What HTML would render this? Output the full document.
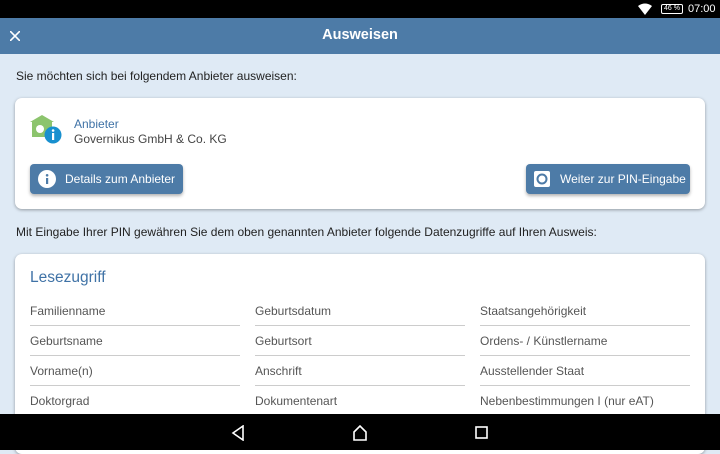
<!DOCTYPE html>
<html><head><meta charset="utf-8"><style>
*{margin:0;padding:0;box-sizing:border-box}
body{width:720px;height:450px;overflow:hidden;background:#dfeaf5;font-family:"Liberation Sans",sans-serif;position:relative}
.sb{position:absolute;left:0;top:0;width:720px;height:18px;background:#000;color:#fff;font-size:11px}
.hd{position:absolute;left:0;top:18px;width:720px;height:36px;background:#4d7ba7;color:#fff}
.hd .t{position:absolute;left:0;right:0;top:9px;text-align:center;font-weight:bold;font-size:14.5px}
.p{position:absolute;left:16px;font-size:12px;color:#222;white-space:nowrap}
.card{position:absolute;left:15px;width:690px;background:#fff;border-radius:7px;box-shadow:0 1px 3px rgba(0,0,0,.35)}
.btn{position:absolute;height:30px;background:#4d7ba7;border-radius:4px;color:#fff;font-size:12px;box-shadow:0 2px 3px rgba(0,0,0,.3);white-space:nowrap}
.cell{position:absolute;width:210px;font-size:12px;color:#555;height:30px;border-bottom:1px solid #ccc;padding-top:8px;white-space:nowrap}
.nav{position:absolute;left:0;top:414px;width:720px;height:36px;background:#000}
</style></head><body>
<div class="sb">
<svg style="position:absolute;left:638px;top:3px" width="14" height="12" viewBox="0 0 14 12"><path d="M0 3 Q7 -2 14 3 L7 12Z" fill="#fff"/></svg>
<div style="position:absolute;left:661px;top:4px;width:22px;height:10px;border:1px solid #fff;border-radius:2px;font-size:7px;text-align:center;line-height:8px">46 %</div>
<div style="position:absolute;left:688px;top:3px;font-size:11px">07:00</div>
</div>
<div class="hd">
<svg style="position:absolute;left:10px;top:13px" width="10" height="10" viewBox="0 0 10 10"><path d="M0 0L10 10M10 0L0 10" stroke="#fff" stroke-width="1.6"/></svg>
<div class="t">Ausweisen</div>
</div>
<div class="p" style="top:69px">Sie möchten sich bei folgendem Anbieter ausweisen:</div>
<div class="card" style="top:98px;height:111px">
<svg style="position:absolute;left:15px;top:15px" width="36" height="34" viewBox="0 0 36 34">
<path d="M0 9 L12 2 L24 9Z" fill="#8cc46d"/><rect x="2" y="9" width="20" height="15" fill="#8cc46d"/><circle cx="10" cy="16" r="4" fill="#fff"/><circle cx="23" cy="22" r="8.5" fill="#1890cf"/><rect x="22" y="20" width="2.2" height="7" fill="#fff"/><circle cx="23.1" cy="17.5" r="1.3" fill="#fff"/></svg>
<div style="position:absolute;left:59px;top:19px;font-size:12px;color:#3f72a6">Anbieter</div>
<div style="position:absolute;left:59px;top:34px;font-size:12px;color:#444">Governikus GmbH &amp; Co. KG</div>
<div class="btn" style="left:15px;top:66px;width:153px">
<svg style="position:absolute;left:8px;top:6px" width="18" height="18"><circle cx="9" cy="9" r="9" fill="#fff"/><rect x="8" y="8" width="2.2" height="6" fill="#4d7ba7"/><circle cx="9.1" cy="5.3" r="1.3" fill="#4d7ba7"/></svg>
<span style="position:absolute;left:35px;top:8px">Details zum Anbieter</span></div>
<div class="btn" style="left:511px;top:66px;width:164px">
<svg style="position:absolute;left:8px;top:7px" width="16" height="16"><rect width="16" height="16" rx="2" fill="#fff"/><circle cx="8" cy="8" r="4.5" fill="none" stroke="#4d7ba7" stroke-width="2"/></svg>
<span style="position:absolute;left:34px;top:8px">Weiter zur PIN-Eingabe</span></div>
</div>
<div class="p" style="top:225px">Mit Eingabe Ihrer PIN gewähren Sie dem oben genannten Anbieter folgende Datenzugriffe auf Ihren Ausweis:</div>
<div class="card" style="top:254px;height:200px">
<div style="position:absolute;left:15px;top:15px;font-size:15.5px;color:#3f72a6">Lesezugriff</div>
<div class="cell" style="left:15px;top:42px">Familienname</div>
<div class="cell" style="left:240px;top:42px">Geburtsdatum</div>
<div class="cell" style="left:465px;top:42px">Staatsangehörigkeit</div>
<div class="cell" style="left:15px;top:72px">Geburtsname</div>
<div class="cell" style="left:240px;top:72px">Geburtsort</div>
<div class="cell" style="left:465px;top:72px">Ordens- / Künstlername</div>
<div class="cell" style="left:15px;top:102px">Vorname(n)</div>
<div class="cell" style="left:240px;top:102px">Anschrift</div>
<div class="cell" style="left:465px;top:102px">Ausstellender Staat</div>
<div class="cell" style="left:15px;top:132px">Doktorgrad</div>
<div class="cell" style="left:240px;top:132px">Dokumentenart</div>
<div class="cell" style="left:465px;top:132px">Nebenbestimmungen I (nur eAT)</div>
</div>
<div class="nav">
<svg style="position:absolute;left:230px;top:11px" width="16" height="16"><path d="M13 1 L3 8 L13 15Z" fill="none" stroke="#fff" stroke-width="1.6"/></svg>
<svg style="position:absolute;left:352px;top:11px" width="16" height="16"><path d="M2 7 L8 1 L14 7 V15 H2Z" fill="none" stroke="#fff" stroke-width="1.6"/></svg>
<svg style="position:absolute;left:475px;top:12px" width="14" height="14"><rect x="1" y="1" width="11" height="11" fill="none" stroke="#fff" stroke-width="1.6"/></svg>
</div>
</body></html>
